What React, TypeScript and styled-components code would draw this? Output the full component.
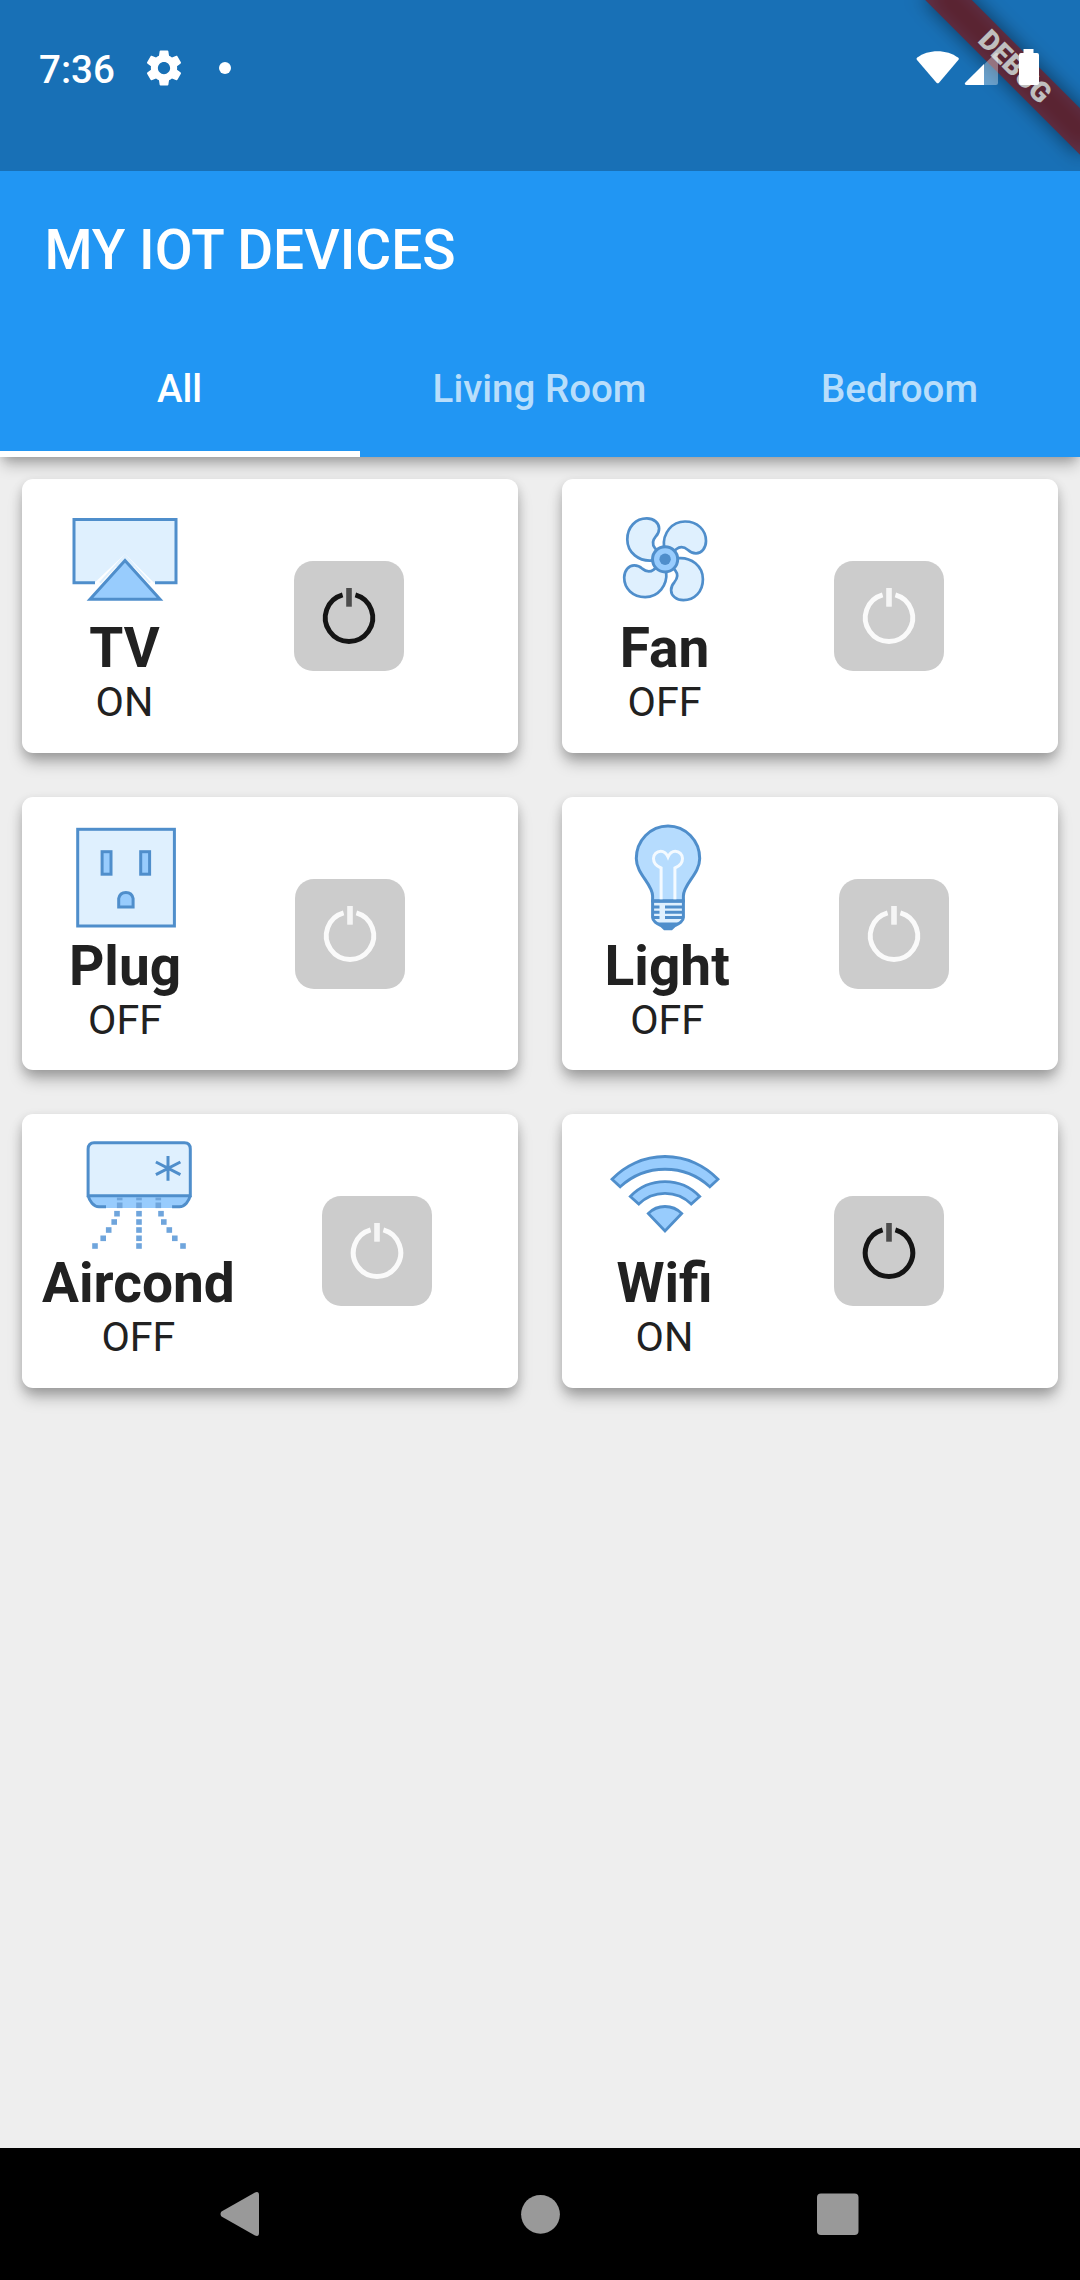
import React, { useState } from "react";
import styled, { createGlobalStyle } from "styled-components";

const GlobalStyle = createGlobalStyle`
  *, *::before, *::after { box-sizing: border-box; }
  body {
    margin: 0;
    background: #eeeeee;
    font-family: Roboto, "Liberation Sans", sans-serif;
  }
`;

const Screen = styled.div`
  position: relative;
  display: flex;
  flex-direction: column;
  width: 1080px;
  height: 2280px;
  overflow: hidden;
  background: #eeeeee;
`;

const Header = styled.header`
  position: relative;
  z-index: 1;
  flex: none;
  background: #2196f3;
  box-shadow: 0 11px 14px -3px rgba(0, 0, 0, 0.24), 0 4px 10px -3px rgba(0, 0, 0, 0.2);
`;

const StatusBar = styled.div`
  position: relative;
  height: 171px;
  overflow: hidden;
`;

/* Debug ribbon: it sits under the system scrim and the status icons. */
const Ribbon = styled.div`
  position: absolute;
  left: 904px;
  top: 49px;
  width: 220px;
  height: 33px;
  display: flex;
  align-items: center;
  justify-content: center;
  transform: rotate(45deg);
  color: #fff;
  font-size: 28px;
  line-height: 33px;
  font-weight: 900;

  &::before {
    content: "";
    position: absolute;
    inset: 0;
    background: rgba(0, 0, 0, 0.5);
    filter: blur(10px);
  }
`;

const RibbonLabel = styled.span`
  position: relative;
  width: 100%;
  padding-left: 3px;
  text-align: center;
  background: rgba(183, 28, 28, 0.627);
`;

const Scrim = styled.div`
  position: relative;
  display: flex;
  justify-content: space-between;
  align-items: flex-start;
  height: 171px;
  padding: 46px 38px 0 39px;
  background: rgba(0, 0, 0, 0.25);
`;

const StatusGroup = styled.div<{ $gap: number }>`
  display: flex;
  align-items: center;
  gap: ${(p) => p.$gap}px;
  height: 43px;
`;

const Clock = styled.span`
  width: 76px;
  padding-top: 3px;
  color: #fff;
  font-size: 38.5px;
  line-height: 45px;
  font-weight: 500;
  white-space: nowrap;
`;

const Dot = styled.span`
  width: 12px;
  height: 12px;
  margin-left: 6px;
  border-radius: 50%;
  background: #fff;
`;

const TitleBar = styled.div`
  display: flex;
  align-items: center;
  height: 154px;
  padding: 3px 44.5px 0;
`;

const Title = styled.h1`
  margin: 0;
  color: #fff;
  font-size: 55px;
  line-height: 64px;
  font-weight: 500;
`;

const Tabs = styled.nav`
  display: grid;
  grid-template-columns: repeat(3, 1fr);
  height: 132px;
`;

const Tab = styled.button<{ $active: boolean }>`
  display: flex;
  align-items: center;
  justify-content: center;
  padding: 0 1px 0 0;
  border: 0;
  border-bottom: 6px solid ${(p) => (p.$active ? "#fff" : "transparent")};
  background: none;
  color: ${(p) => (p.$active ? "#fff" : "rgba(255, 255, 255, 0.7)")};
  font: 500 38.5px/45px Roboto, "Liberation Sans", sans-serif;
  cursor: pointer;
`;

const Devices = styled.main`
  flex: 1;
  display: grid;
  grid-template-columns: repeat(2, 496px);
  grid-auto-rows: 273.7px;
  gap: 44px;
  padding: 22px;
`;

const Card = styled.article`
  display: flex;
  align-items: center;
  justify-content: space-evenly;
  border-radius: 11px;
  background: #fff;
  box-shadow: 0 11px 16px -2px rgba(0, 0, 0, 0.27), 0 4px 11px rgba(0, 0, 0, 0.15);
`;

const Info = styled.div`
  display: flex;
  flex-direction: column;
  align-items: center;
  color: #212121;
`;

const Name = styled.h2`
  margin: 0;
  padding-right: 1px;
  font-size: 55px;
  line-height: 65px;
  font-weight: 700;
`;

const State = styled.span`
  padding: 0 1px 3px 0;
  font-size: 41.25px;
  line-height: 42px;
`;

const PowerButton = styled.button`
  flex: none;
  width: 110px;
  height: 110px;
  margin: 0 66px;
  padding: 0;
  border: 0;
  border-radius: 19px;
  background: #cccccc;
  cursor: pointer;
`;

const Glyph = styled.svg`
  display: block;
  flex: none;
`;

const NavBar = styled.footer`
  flex: none;
  display: grid;
  grid-template-columns: repeat(3, 298px);
  justify-content: center;
  place-items: center;
  height: 132px;
  background: #000;
`;

const LINE = "#4f8ecb";
const PALE = "#dff0fe";
const MID = "#98ccfd";

const DeviceSvg = ({ children }: { children: React.ReactNode }) => (
  <Glyph width="110" height="110" viewBox="0 0 110 110" fill="none" stroke={LINE} strokeWidth="3">
    {children}
  </Glyph>
);

const TvIcon = () => (
  <DeviceSvg>
    <path d="M4 13.5H106V76.8H84L55 48L24.5 76.8H4z" fill={PALE} stroke="none" />
    <path d="M55 48L66 61H44z" fill={PALE} stroke="none" />
    <path d="M25 76.8H4V13.5H106V76.8H85" />
    <path d="M20 93.3L55 54.5L90 93.3z" fill={MID} />
    <path d="M30 76.8L55 49.5L80 76.8" stroke={PALE} strokeWidth="2" />
  </DeviceSvg>
);

const FanIcon = () => (
  <DeviceSvg>
    {[0, 90, 180, 270].map((turn) => (
      <path
        key={turn}
        transform={`rotate(${turn} 55.1 53.3)`}
        d="M54 41C52.5 27 62 15.5 75 15.5C87.5 15.5 96 24 96 35C96 42 91.5 47.3 86 47.3C82 47.3 79.5 45.5 78 44C75 41.5 71 39.5 66.5 43L55 53z"
        fill={PALE}
        strokeWidth="2.7"
      />
    ))}
    <circle cx="55.1" cy="53.3" r="12.6" fill={MID} />
    <circle cx="55.1" cy="53.3" r="5.7" fill={LINE} stroke="none" />
  </DeviceSvg>
);

const PlugIcon = () => (
  <DeviceSvg>
    <rect x="6.7" y="5.3" width="96.7" height="96.7" fill={PALE} />
    <rect x="31.1" y="27.7" width="8.9" height="22.5" fill={MID} />
    <rect x="69.7" y="27.7" width="8.9" height="22.5" fill={MID} />
    <path d="M47.7 82.9V74.5C48.5 70.5 51 68.5 54.9 68.5S61.3 70.5 62.1 74.5V82.9z" fill={MID} />
  </DeviceSvg>
);

const LightIcon = () => (
  <DeviceSvg>
    <path
      d="M39.6 77V72C39.6 60 23.3 50 23.3 34.6A31.7 32.6 0 0 1 86.7 34.6C86.7 50 70.4 60 70.4 72V77z"
      fill="#b6dcfe"
    />
    <path
      d="M48.1 76V44C43 42 40.5 38.5 40.5 34.5C40.5 30.5 43.8 27.3 47.7 27.3C51.5 27.3 53.5 29.5 55 33C56.5 29.5 58.5 27.3 62.3 27.3C66.2 27.3 69.5 30.5 69.5 34.5C69.5 38.5 67 42 61.9 44V76"
      stroke="#f4faff"
    />
    <path d="M39.6 77H70.4V93.6C70.4 97 66 100 63 101H47C44 100 39.6 97 39.6 93.6z" fill={PALE} />
    <path d="M41 77.3H69M41 83H46.5M52 83H69M41 88.3H46.5M52 88.3H69M41 93.6H46.5M52 93.6H69" />
    <path d="M44 98.6H66L63.5 102L59 106.3H51L46.5 102z" fill={LINE} stroke="none" />
  </DeviceSvg>
);

/* Offset from the centre line and height of each dot in the outer air streams. */
const AIR_TRAIL = [
  [19.3, 57.7],
  [19.3, 64.3],
  [22, 72.7],
  [24.8, 81],
  [30.3, 89],
  [35.8, 97.3],
  [44, 105],
];

const AircondIcon = () => (
  <DeviceSvg>
    <path d="M4.1 54.7H106.3L102 61L95 67H15L8 61z" fill={MID} stroke="none" />
    <path d="M4.1 54.7V8C4.1 4 6.5 1.8 10 1.8H100.4C104 1.8 106.3 4 106.3 8V54.7z" fill={PALE} />
    <path d="M4.1 54.7C5.5 60 9.5 65.7 15 65.7H22M106.3 54.7C104.9 60 100.9 65.7 95.4 65.7H88.1" />
    <path d="M84 15V39.7M71.9 21L96.4 33.7M71.9 33.7L96.4 21" />
    {AIR_TRAIL.map(([dx, y], i) => (
      <g key={y} fill="#6fa5dc" stroke="none">
        {[55 - dx, 55, 55 + dx].map((x) => (
          <rect key={x} x={x - 2.8} y={i === 0 ? y - 1.2 : y - 2.8} width="5.6" height={i === 0 ? 2.8 : 5.6} />
        ))}
      </g>
    ))}
  </DeviceSvg>
);

const WifiIcon = () => (
  <DeviceSvg>
    <g fill={MID} strokeWidth="2.8">
      <path d="M2 38.3A73 73 0 0 1 108 38.3L99.8 45.8A66 66 0 0 0 10.2 45.8z" />
      <path d="M20.3 55.5A48 48 0 0 1 89.7 55.5L81.2 63A37.4 37.4 0 0 0 28.8 63z" />
      <path d="M38.3 72.5A23.4 23.4 0 0 1 71.7 72.5L55 90z" />
    </g>
  </DeviceSvg>
);

const PowerIcon = ({ on }: { on: boolean }) => (
  <Glyph width="110" height="110" viewBox="0 0 110 110" fill="none">
    <path d="M48.6 33.9A23.7 23.7 0 1 0 61.4 33.9" stroke={on ? "#141414" : "#fafafa"} strokeWidth="5" />
    <path d="M55 27V45.7" stroke={on ? "#4c4c4c" : "#f5f5f5"} strokeWidth="5.6" />
  </Glyph>
);

const GearIcon = () => (
  <Glyph width="42" height="42" viewBox="0 0 24 24" fill="#fff">
    <path d="M19.43 12.98c.04-.32.07-.64.07-.98s-.03-.66-.07-.98l2.11-1.65c.19-.15.24-.42.12-.64l-2-3.46c-.12-.22-.39-.3-.61-.22l-2.49 1c-.52-.4-1.08-.73-1.69-.98l-.38-2.65C14.46 2.18 14.25 2 14 2h-4c-.25 0-.46.18-.49.42l-.38 2.65c-.61.25-1.17.59-1.69.98l-2.49-1c-.23-.09-.49 0-.61.22l-2 3.46c-.13.22-.07.49.12.64l2.11 1.65c-.04.32-.07.65-.07.98s.03.66.07.98l-2.11 1.65c-.19.15-.24.42-.12.64l2 3.46c.12.22.39.3.61.22l2.49-1c.52.4 1.08.73 1.69.98l.38 2.65c.03.24.24.42.49.42h4c.25 0 .46-.18.49-.42l.38-2.65c.61-.25 1.17-.59 1.69-.98l2.49 1c.23.09.49 0 .61-.22l2-3.46c.12-.22.07-.49-.12-.64l-2.11-1.65zM12 15.5c-1.93 0-3.5-1.57-3.5-3.5s1.57-3.5 3.5-3.5 3.5 1.57 3.5 3.5-1.57 3.5-3.5 3.5z" />
  </Glyph>
);

const StatusIcons = () => (
  <Glyph width="126" height="43" viewBox="0 0 126 43" fill="#fff">
    <path d="M1.2 11.5C12 3 31 3 42 11.5C43 12.3 43 13 42.5 13.7L23 36.7Q21.7 38 20.5 36.7L.8 13.7Q0 12.5 1.2 11.5z" />
    <path d="M68 18.5L79 7.5Q82 5.5 82 9V37Q82 39 80 39H68z" opacity="0.35" />
    <path d="M68 18V39H50.5Q48 38.5 49.2 36.8z" />
    <path d="M107.5 3H117.5V7H121Q123 7 123 9V37Q123 39 121 39H105Q103 39 103 37V9Q103 7 105 7H107.5z" />
  </Glyph>
);

type Device = { name: string; on: boolean; Icon: () => React.JSX.Element };

const DEVICES: Device[] = [
  { name: "TV", on: true, Icon: TvIcon },
  { name: "Fan", on: false, Icon: FanIcon },
  { name: "Plug", on: false, Icon: PlugIcon },
  { name: "Light", on: false, Icon: LightIcon },
  { name: "Aircond", on: false, Icon: AircondIcon },
  { name: "Wifi", on: true, Icon: WifiIcon },
];

const TABS = ["All", "Living Room", "Bedroom"];

export default function App() {
  const [tab, setTab] = useState(0);
  const [power, setPower] = useState(DEVICES.map((d) => d.on));
  const toggle = (index: number) => setPower((prev) => prev.map((v, i) => (i === index ? !v : v)));

  return (
    <Screen>
      <GlobalStyle />
      <Header>
        <StatusBar>
          <Ribbon>
            <RibbonLabel>DEBUG</RibbonLabel>
          </Ribbon>
          <Scrim>
            <StatusGroup $gap={28}>
              <Clock>7:36</Clock>
              <GearIcon />
              <Dot />
            </StatusGroup>
            <StatusGroup $gap={0}>
              <StatusIcons />
            </StatusGroup>
          </Scrim>
        </StatusBar>
        <TitleBar>
          <Title>MY IOT DEVICES</Title>
        </TitleBar>
        <Tabs>
          {TABS.map((label, i) => (
            <Tab key={label} $active={i === tab} onClick={() => setTab(i)}>
              {label}
            </Tab>
          ))}
        </Tabs>
      </Header>
      <Devices>
        {DEVICES.map(({ name, Icon }, i) => (
          <Card key={name}>
            <Info>
              <Icon />
              <Name>{name}</Name>
              <State>{power[i] ? "ON" : "OFF"}</State>
            </Info>
            <PowerButton onClick={() => toggle(i)}>
              <PowerIcon on={power[i]} />
            </PowerButton>
          </Card>
        ))}
      </Devices>
      <NavBar>
        <Glyph width="44" height="46" viewBox="0 0 44 46" fill="#999">
          <path d="M1.5 20.5L35 1.5Q39 0 39 4V42Q39 46 35 44.5L1.5 25.5Q-.5 23 1.5 20.5z" />
        </Glyph>
        <Glyph width="40" height="40" viewBox="0 0 40 40" fill="#999">
          <circle cx="20.5" cy="20.3" r="19.4" />
        </Glyph>
        <Glyph width="42" height="42" viewBox="0 0 42 42" fill="#999">
          <rect x="0" y="0.5" width="41.5" height="41.5" rx="4" />
        </Glyph>
      </NavBar>
    </Screen>
  );
}
